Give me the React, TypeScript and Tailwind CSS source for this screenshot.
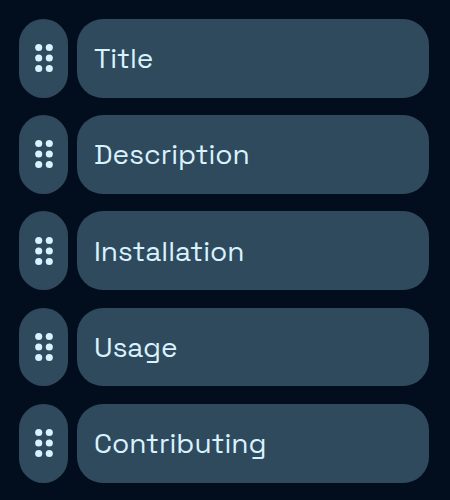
const sections = ["Title", "Description", "Installation", "Usage", "Contributing"];

function GripIcon() {
  return (
    <svg width="20" height="30" viewBox="0 0 20 30" fill="currentColor" aria-hidden="true">
      {[4.5, 15, 25.5].map((y) => (
        <g key={y}>
          <circle cx="4.7" cy={y} r="3.55" />
          <circle cx="15.3" cy={y} r="3.55" />
        </g>
      ))}
    </svg>
  );
}

export default function App() {
  return (
    <main className="flex h-[500px] w-[450px] flex-col gap-[17.5px] overflow-hidden bg-[#020e1e] pt-[18.9px] pr-[21px] pl-[19px] font-['Space_Grotesk','Inter',sans-serif] text-[#d9f2ff]">
      {sections.map((name) => (
        <div key={name} className="flex h-[78.75px] shrink-0 gap-[9px]">
          <button
            aria-label={`Move ${name}`}
            className="flex w-[49px] shrink-0 items-center justify-center rounded-[26px] bg-[#2f4a5c] pb-[0.2px]"
          >
            <GripIcon />
          </button>
          <div className="flex flex-1 items-center rounded-[26px] bg-[#2f4a5c] pb-[0.2px] pl-[17px]">
            <span className="text-[28px] leading-9">{name}</span>
          </div>
        </div>
      ))}
    </main>
  );
}
